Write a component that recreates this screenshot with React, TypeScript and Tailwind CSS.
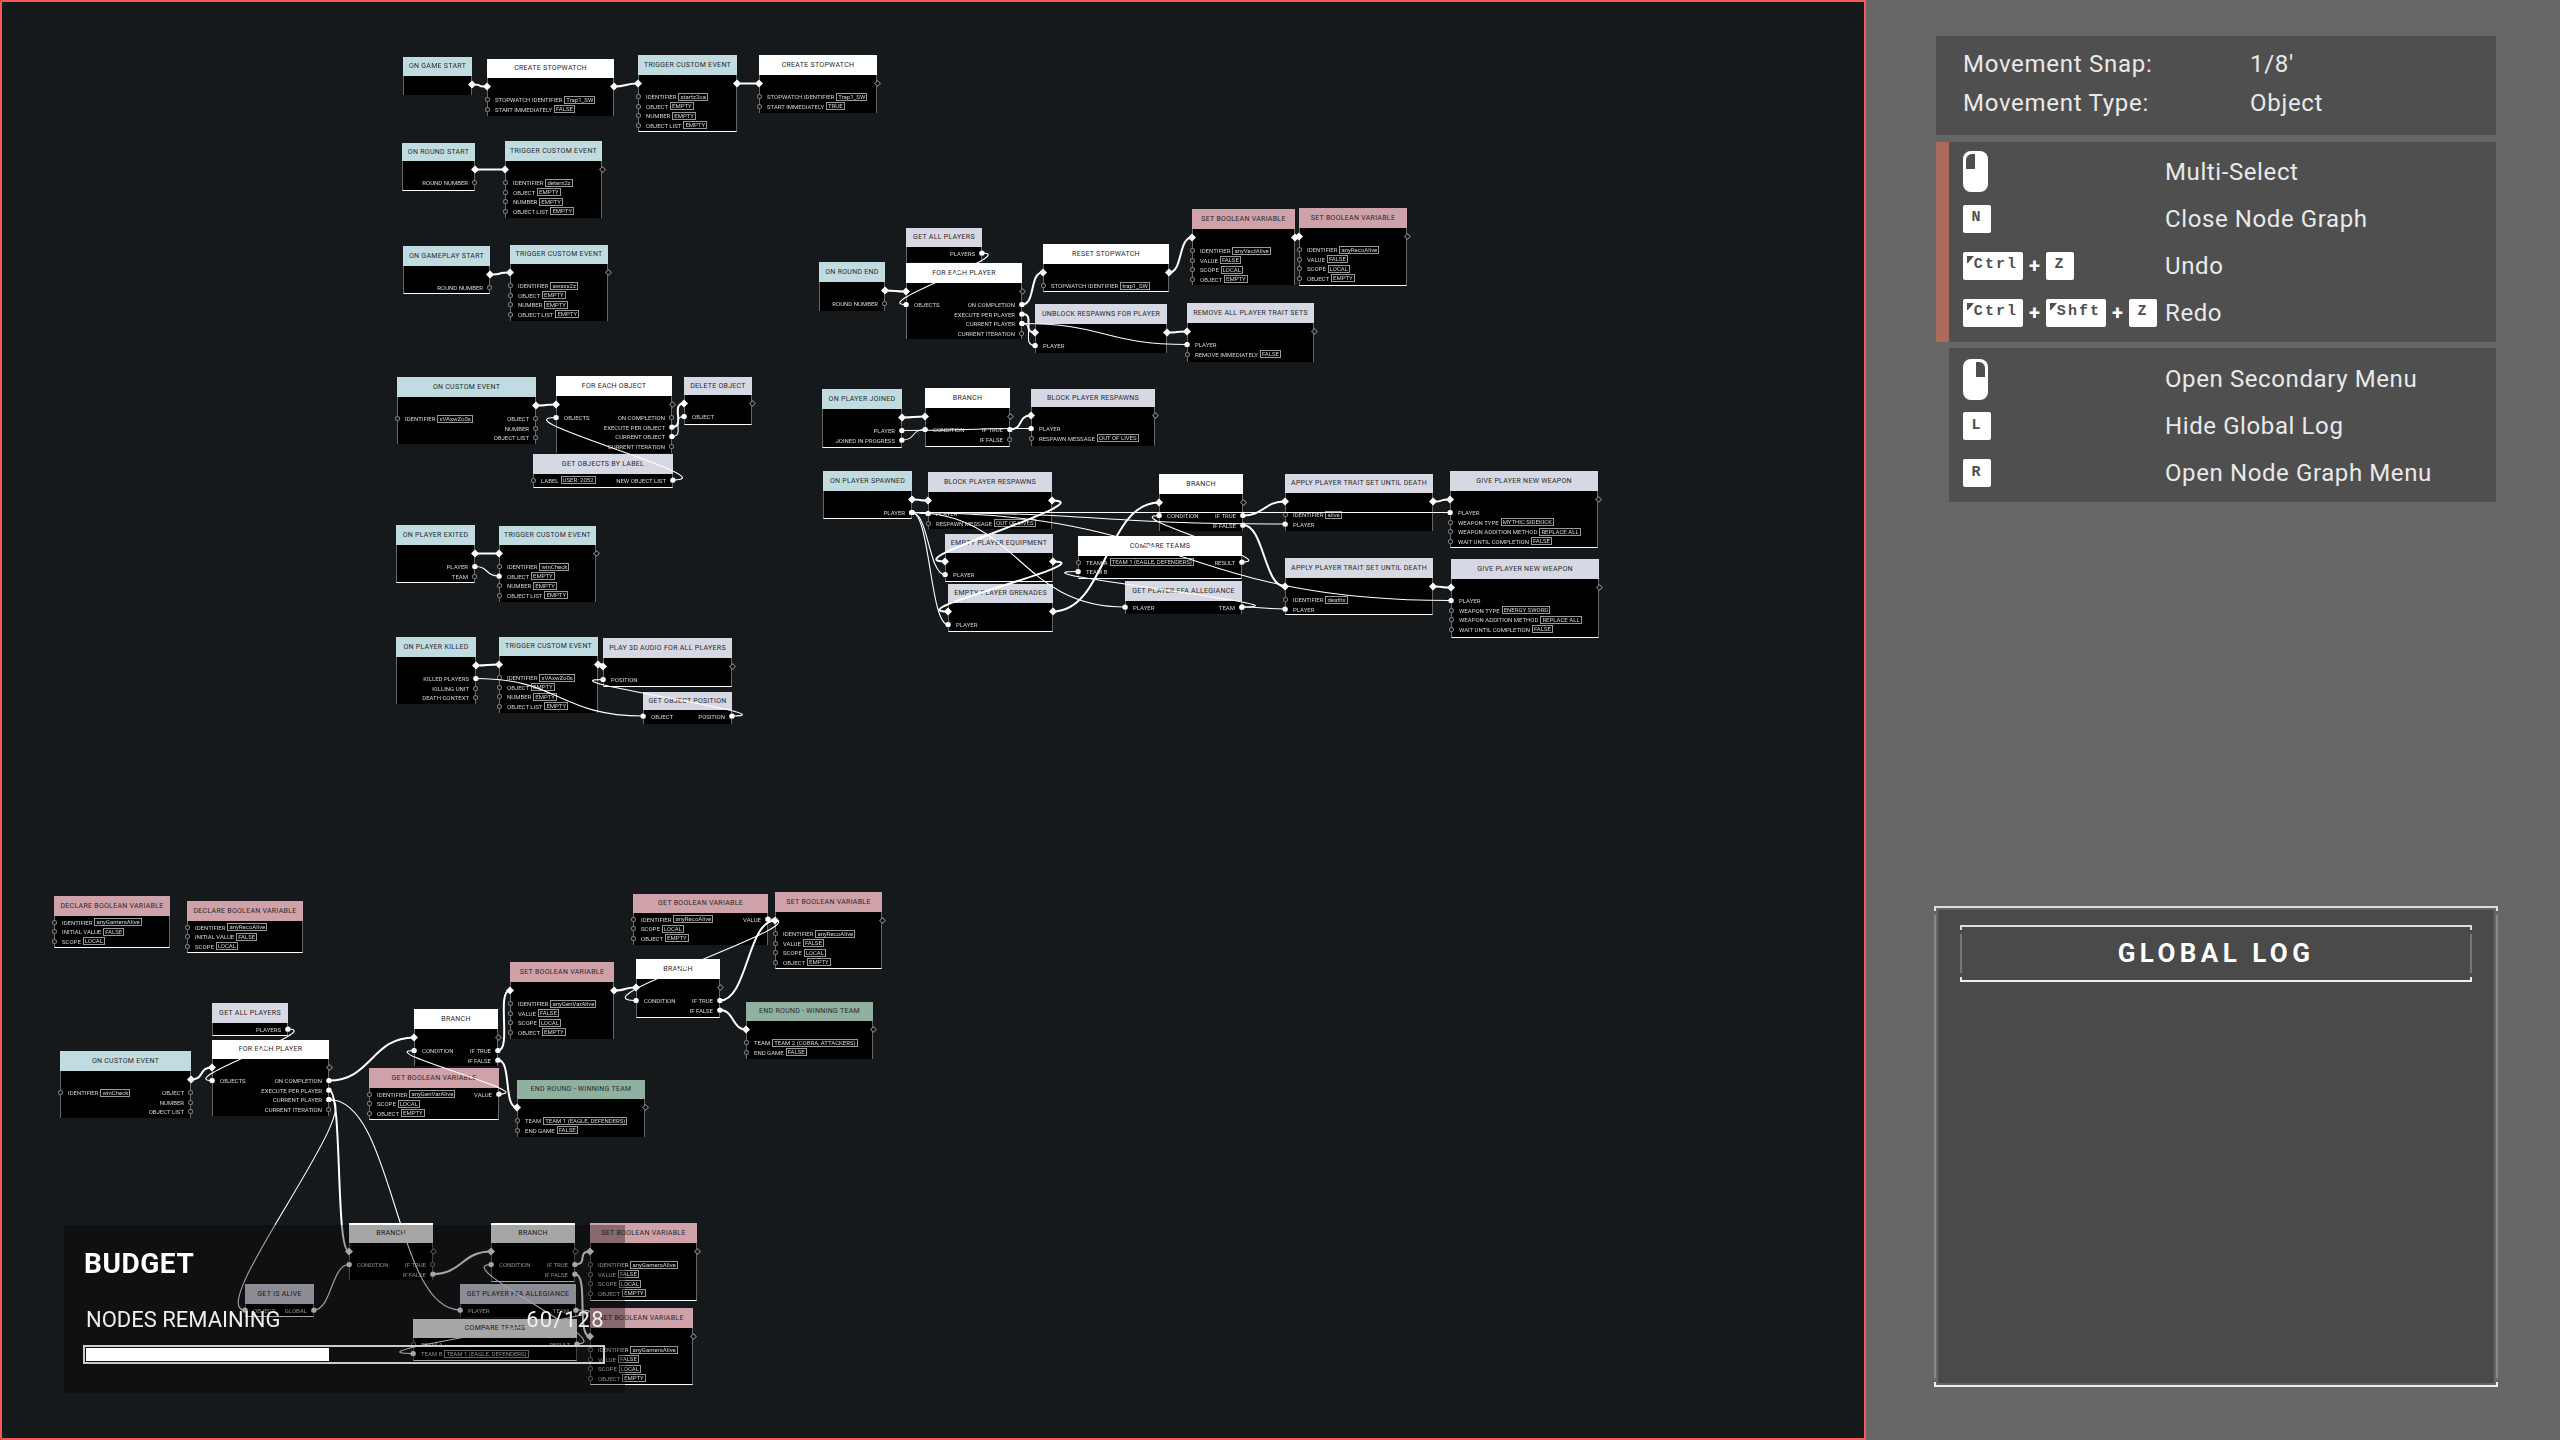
import React from "react";

const TEAL = "bg-[#c0dce1]";
const WHITE = "bg-white";
const LILAC = "bg-[#d6d8e4]";
const ROSE = "bg-[#cfa1a9]";
const GREEN = "bg-[#90b0a0]";

type Row = string | [string, string];
type GraphNode = {
  title: string;
  x: number;
  y: number;
  w: number;
  h: number;
  head: number;
  color: string;
  exec?: boolean;
  left?: Row[];
  right?: string[];
  line?: boolean;
};

const triggerRows = (id: string): Row[] => [
  ["IDENTIFIER", id],
  ["OBJECT", "EMPTY"],
  ["NUMBER", "EMPTY"],
  ["OBJECT LIST", "EMPTY"],
];
const stopwatchRows = (start: string): Row[] => [
  ["STOPWATCH IDENTIFIER", "Trap1_SW"],
  ["START IMMEDIATELY", start],
];
const boolRows = (id: string): Row[] => [
  ["IDENTIFIER", id],
  ["VALUE", "FALSE"],
  ["SCOPE", "LOCAL"],
  ["OBJECT", "EMPTY"],
];
const weaponRows = (kind: string): Row[] => [
  "PLAYER",
  ["WEAPON TYPE", kind],
  ["WEAPON ADDITION METHOD", "REPLACE ALL"],
  ["WAIT UNTIL COMPLETION", "FALSE"],
];
const forEachRight = (word: string) => ["ON COMPLETION", `EXECUTE PER ${word}`, `CURRENT ${word}`, "CURRENT ITERATION"];
const customRight = ["OBJECT", "NUMBER", "OBJECT LIST"];

const nodes: Record<string, GraphNode> = {
  a1: { title: "ON GAME START", x: 403, y: 57, w: 69, h: 38, head: 19, color: TEAL, exec: true },
  a2: { title: "CREATE STOPWATCH", x: 487, y: 59, w: 127, h: 57, head: 19, color: WHITE, exec: true, left: stopwatchRows("FALSE") },
  a3: { title: "TRIGGER CUSTOM EVENT", x: 638, y: 55, w: 99, h: 77, head: 20, color: TEAL, exec: true, left: triggerRows("startz2oa"), line: true },
  a4: { title: "CREATE STOPWATCH", x: 759, y: 55, w: 118, h: 58, head: 20, color: WHITE, exec: true, left: stopwatchRows("TRUE") },
  b1: { title: "ON ROUND START", x: 402, y: 143, w: 73, h: 48, head: 18, color: TEAL, exec: true, right: ["ROUND NUMBER"], line: true },
  b2: { title: "TRIGGER CUSTOM EVENT", x: 505, y: 141, w: 97, h: 77, head: 20, color: TEAL, exec: true, left: triggerRows("deterx2z") },
  c1: { title: "ON GAMEPLAY START", x: 403, y: 246, w: 87, h: 48, head: 20, color: TEAL, exec: true, right: ["ROUND NUMBER"], line: true },
  c2: { title: "TRIGGER CUSTOM EVENT", x: 510, y: 245, w: 98, h: 76, head: 19, color: TEAL, exec: true, left: triggerRows("awaxs2z") },

  d1: { title: "ON ROUND END", x: 819, y: 262, w: 66, h: 49, head: 20, color: TEAL, exec: true, right: ["ROUND NUMBER"] },
  d2: { title: "GET ALL PLAYERS", x: 906, y: 228, w: 76, h: 34, head: 19, color: LILAC, right: ["PLAYERS"] },
  d3: { title: "FOR EACH PLAYER", x: 906, y: 263, w: 116, h: 76, head: 20, color: WHITE, exec: true, left: ["OBJECTS"], right: forEachRight("PLAYER") },
  d4: { title: "RESET STOPWATCH", x: 1043, y: 244, w: 126, h: 48, head: 20, color: WHITE, exec: true, left: [["STOPWATCH IDENTIFIER", "trap1_SW"]], line: true },
  d5: { title: "SET BOOLEAN VARIABLE", x: 1192, y: 209, w: 103, h: 76, head: 20, color: ROSE, exec: true, left: boolRows("anyVectAlive") },
  d6: { title: "SET BOOLEAN VARIABLE", x: 1299, y: 208, w: 108, h: 78, head: 20, color: ROSE, exec: true, left: boolRows("anyRecoAlive"), line: true },
  d7: { title: "UNBLOCK RESPAWNS FOR PLAYER", x: 1035, y: 304, w: 132, h: 49, head: 20, color: LILAC, exec: true, left: ["PLAYER"] },
  d8: { title: "REMOVE ALL PLAYER TRAIT SETS", x: 1187, y: 303, w: 127, h: 59, head: 20, color: LILAC, exec: true, left: ["PLAYER", ["REMOVE IMMEDIATELY", "FALSE"]] },
  e1: { title: "ON PLAYER JOINED", x: 822, y: 389, w: 80, h: 59, head: 20, color: TEAL, exec: true, right: ["PLAYER", "JOINED IN PROGRESS"], line: true },
  e2: { title: "BRANCH", x: 925, y: 388, w: 85, h: 59, head: 20, color: WHITE, exec: true, left: ["CONDITION"], right: ["IF TRUE", "IF FALSE"], line: true },
  e3: { title: "BLOCK PLAYER RESPAWNS", x: 1031, y: 389, w: 124, h: 57, head: 18, color: LILAC, exec: true, left: ["PLAYER", ["RESPAWN MESSAGE", "OUT OF LIVES"]] },

  f1: { title: "ON PLAYER SPAWNED", x: 823, y: 471, w: 89, h: 48, head: 20, color: TEAL, exec: true, right: ["PLAYER"], line: true },
  f2: { title: "BLOCK PLAYER RESPAWNS", x: 928, y: 472, w: 124, h: 57, head: 20, color: LILAC, exec: true, left: ["PLAYER", ["RESPAWN MESSAGE", "OUT OF LIVES"]] },
  f3: { title: "EMPTY PLAYER EQUIPMENT", x: 945, y: 534, w: 108, h: 48, head: 19, color: LILAC, exec: true, left: ["PLAYER"], line: true },
  f4: { title: "EMPTY PLAYER GRENADES", x: 948, y: 584, w: 105, h: 48, head: 19, color: LILAC, exec: true, left: ["PLAYER"], line: true },
  f5: { title: "BRANCH", x: 1159, y: 474, w: 84, h: 57, head: 20, color: WHITE, exec: true, left: ["CONDITION"], right: ["IF TRUE", "IF FALSE"] },
  f6: { title: "COMPARE TEAMS", x: 1078, y: 536, w: 164, h: 43, head: 20, color: WHITE, left: [["TEAM A", "TEAM 1 (EAGLE, DEFENDERS)"], "TEAM B"], right: ["RESULT"], line: true },
  f7: { title: "GET PLAYER FFA ALLEGIANCE", x: 1125, y: 581, w: 117, h: 33, head: 20, color: LILAC, left: ["PLAYER"], right: ["TEAM"] },
  f8: { title: "APPLY PLAYER TRAIT SET UNTIL DEATH", x: 1285, y: 474, w: 148, h: 57, head: 19, color: LILAC, exec: true, left: [["IDENTIFIER", "alive"], "PLAYER"] },
  f9: { title: "APPLY PLAYER TRAIT SET UNTIL DEATH", x: 1285, y: 558, w: 148, h: 57, head: 20, color: LILAC, exec: true, left: [["IDENTIFIER", "deaths"], "PLAYER"], line: true },
  f10: { title: "GIVE PLAYER NEW WEAPON", x: 1450, y: 471, w: 148, h: 77, head: 20, color: LILAC, exec: true, left: weaponRows("MYTHIC SIDEKICK"), line: true },
  f11: { title: "GIVE PLAYER NEW WEAPON", x: 1451, y: 559, w: 148, h: 79, head: 20, color: LILAC, exec: true, left: weaponRows("ENERGY SWORD"), line: true },

  g1: { title: "ON CUSTOM EVENT", x: 397, y: 377, w: 139, h: 67, head: 20, color: TEAL, exec: true, left: [["IDENTIFIER", "xVAxwZo0s"]], right: customRight },
  g2: { title: "FOR EACH OBJECT", x: 556, y: 376, w: 116, h: 77, head: 20, color: WHITE, exec: true, left: ["OBJECTS"], right: forEachRight("OBJECT") },
  g3: { title: "DELETE OBJECT", x: 684, y: 377, w: 68, h: 48, head: 18, color: LILAC, exec: true, left: ["OBJECT"], line: true },
  g4: { title: "GET OBJECTS BY LABEL", x: 533, y: 454, w: 140, h: 34, head: 20, color: LILAC, left: [["LABEL", "USER: 2052"]], right: ["NEW OBJECT LIST"], line: true },
  h1: { title: "ON PLAYER EXITED", x: 396, y: 525, w: 79, h: 58, head: 20, color: TEAL, exec: true, right: ["PLAYER", "TEAM"], line: true },
  h2: { title: "TRIGGER CUSTOM EVENT", x: 499, y: 526, w: 97, h: 76, head: 19, color: TEAL, exec: true, left: triggerRows("winCheck") },
  i1: { title: "ON PLAYER KILLED", x: 396, y: 637, w: 80, h: 67, head: 20, color: TEAL, exec: true, right: ["KILLED PLAYERS", "KILLING UNIT", "DEATH CONTEXT"] },
  i2: { title: "TRIGGER CUSTOM EVENT", x: 499, y: 637, w: 99, h: 76, head: 19, color: TEAL, exec: true, left: triggerRows("xVAxwZo0s") },
  i3: { title: "PLAY 3D AUDIO FOR ALL PLAYERS", x: 603, y: 638, w: 129, h: 49, head: 20, color: LILAC, exec: true, left: ["POSITION"], line: true },
  i4: { title: "GET OBJECT POSITION", x: 643, y: 692, w: 89, h: 32, head: 18, color: LILAC, left: ["OBJECT"], right: ["POSITION"] },

  j1: { title: "DECLARE BOOLEAN VARIABLE", x: 54, y: 896, w: 116, h: 52, head: 20, color: ROSE, left: [["IDENTIFIER", "anyGamersAlive"], ["INITIAL VALUE", "FALSE"], ["SCOPE", "LOCAL"]], line: true },
  j2: { title: "DECLARE BOOLEAN VARIABLE", x: 187, y: 901, w: 116, h: 52, head: 20, color: ROSE, left: [["IDENTIFIER", "anyRecoAlive"], ["INITIAL VALUE", "FALSE"], ["SCOPE", "LOCAL"]], line: true },
  k1: { title: "GET ALL PLAYERS", x: 212, y: 1003, w: 76, h: 33, head: 20, color: LILAC, right: ["PLAYERS"], line: true },
  k2: { title: "FOR EACH PLAYER", x: 212, y: 1040, w: 117, h: 76, head: 19, color: WHITE, exec: true, left: ["OBJECTS"], right: forEachRight("PLAYER") },
  k3: { title: "ON CUSTOM EVENT", x: 60, y: 1051, w: 131, h: 67, head: 20, color: TEAL, exec: true, left: [["IDENTIFIER", "winCheck"]], right: customRight },
  k4: { title: "BRANCH", x: 414, y: 1009, w: 84, h: 57, head: 20, color: WHITE, exec: true, left: ["CONDITION"], right: ["IF TRUE", "IF FALSE"] },
  k5: { title: "GET BOOLEAN VARIABLE", x: 369, y: 1068, w: 130, h: 52, head: 20, color: ROSE, left: [["IDENTIFIER", "anyGenVarAlive"], ["SCOPE", "LOCAL"], ["OBJECT", "EMPTY"]], right: ["VALUE"], line: true },
  k6: { title: "SET BOOLEAN VARIABLE", x: 510, y: 962, w: 104, h: 77, head: 20, color: ROSE, exec: true, left: boolRows("anyGenVarAlive") },
  k7: { title: "GET BOOLEAN VARIABLE", x: 633, y: 894, w: 135, h: 51, head: 19, color: ROSE, left: [["IDENTIFIER", "anyRecoAlive"], ["SCOPE", "LOCAL"], ["OBJECT", "EMPTY"]], right: ["VALUE"] },
  k8: { title: "SET BOOLEAN VARIABLE", x: 775, y: 892, w: 107, h: 77, head: 20, color: ROSE, exec: true, left: boolRows("anyRecoAlive"), line: true },
  k9: { title: "BRANCH", x: 636, y: 959, w: 84, h: 59, head: 20, color: WHITE, exec: true, left: ["CONDITION"], right: ["IF TRUE", "IF FALSE"], line: true },
  k10: { title: "END ROUND - WINNING TEAM", x: 746, y: 1002, w: 127, h: 57, head: 19, color: GREEN, exec: true, left: [["TEAM", "TEAM 2 (COBRA, ATTACKERS)"], ["END GAME", "FALSE"]] },
  k11: { title: "END ROUND - WINNING TEAM", x: 517, y: 1080, w: 128, h: 57, head: 19, color: GREEN, exec: true, left: [["TEAM", "TEAM 1 (EAGLE, DEFENDERS)"], ["END GAME", "FALSE"]] },

  m1: { title: "GET IS ALIVE", x: 245, y: 1284, w: 69, h: 33, head: 20, color: LILAC, left: ["OBJECT"], right: ["GLOBAL"], line: true },
  m2: { title: "BRANCH", x: 349, y: 1223, w: 84, h: 57, head: 20, color: WHITE, exec: true, left: ["CONDITION"], right: ["IF TRUE", "IF FALSE"] },
  m3: { title: "BRANCH", x: 491, y: 1223, w: 84, h: 59, head: 20, color: WHITE, exec: true, left: ["CONDITION"], right: ["IF TRUE", "IF FALSE"], line: true },
  m4: { title: "SET BOOLEAN VARIABLE", x: 590, y: 1223, w: 107, h: 78, head: 20, color: ROSE, exec: true, left: boolRows("anyGamersAlive"), line: true },
  m5: { title: "GET PLAYER FFA ALLEGIANCE", x: 460, y: 1284, w: 116, h: 33, head: 20, color: LILAC, left: ["PLAYER"], right: ["TEAM"] },
  m6: { title: "COMPARE TEAMS", x: 413, y: 1319, w: 164, h: 42, head: 19, color: WHITE, left: ["TEAM A", ["TEAM B", "TEAM 1 (EAGLE, DEFENDERS)"]], right: ["RESULT"], line: true },
  m7: { title: "SET BOOLEAN VARIABLE", x: 590, y: 1308, w: 103, h: 77, head: 20, color: ROSE, exec: true, left: boolRows("anyGamersAlive"), line: true },
};

// [from, out port, to, in port]: port "e" is the exec diamond, a number is a row
type Wire = [string, "e" | number, string, "e" | number];
const wires: Wire[] = [
  ["a1", "e", "a2", "e"], ["a2", "e", "a3", "e"], ["a3", "e", "a4", "e"],
  ["b1", "e", "b2", "e"], ["c1", "e", "c2", "e"],
  ["d1", "e", "d3", "e"], ["d2", 0, "d3", 0], ["d3", 0, "d4", "e"], ["d4", "e", "d5", "e"], ["d5", "e", "d6", "e"],
  ["d3", 1, "d7", "e"], ["d3", 2, "d7", 0], ["d7", "e", "d8", "e"], ["d3", 2, "d8", 0],
  ["e1", "e", "e2", "e"], ["e1", 1, "e2", 0], ["e1", 0, "e3", 0], ["e2", 0, "e3", "e"],
  ["f1", "e", "f2", "e"], ["f2", "e", "f3", "e"], ["f3", "e", "f4", "e"], ["f4", "e", "f5", "e"],
  ["f1", 0, "f2", 0], ["f1", 0, "f3", 0], ["f1", 0, "f4", 0], ["f1", 0, "f7", 0], ["f1", 0, "f8", 1], ["f1", 0, "f10", 0], ["f1", 0, "f11", 0],
  ["f7", 0, "f6", 1], ["f7", 0, "f9", 1], ["f6", 0, "f5", 0], ["f5", 0, "f8", "e"], ["f5", 1, "f9", "e"], ["f8", "e", "f10", "e"], ["f9", "e", "f11", "e"],
  ["g1", "e", "g2", "e"], ["g2", 1, "g3", "e"], ["g2", 2, "g3", 0], ["g4", 0, "g2", 0],
  ["h1", "e", "h2", "e"], ["h1", 0, "h2", 1],
  ["i1", "e", "i2", "e"], ["i2", "e", "i3", "e"], ["i1", 0, "i4", 0], ["i4", 0, "i3", 0],
  ["k3", "e", "k2", "e"], ["k1", 0, "k2", 0], ["k2", 0, "k4", "e"], ["k5", 0, "k4", 0], ["k4", 0, "k6", "e"], ["k4", 1, "k11", "e"],
  ["k6", "e", "k9", "e"], ["k7", 0, "k9", 0], ["k9", 0, "k8", "e"], ["k9", 1, "k10", "e"],
  ["k2", 1, "m2", "e"], ["k2", 2, "m1", 0], ["k2", 2, "m5", 0], ["m1", 0, "m2", 0], ["m2", 1, "m3", "e"],
  ["m5", 0, "m6", 1], ["m6", 0, "m3", 0], ["m3", 0, "m4", "e"], ["m3", 1, "m7", "e"],
];

const portY = (n: GraphNode, port: "e" | number) =>
  port === "e" ? n.y + n.head + 8.5 : n.y + n.head + (n.exec ? 21.5 : 6) + port * 9.5;

function WireLayer() {
  return (
    <svg className="absolute inset-0" width={1866} height={1440} fill="none">
      {wires.map(([from, out, to, into], i) => {
        const a = nodes[from];
        const b = nodes[to];
        const x1 = a.x + a.w;
        const y1 = portY(a, out);
        const x2 = b.x;
        const y2 = portY(b, into);
        const k = Math.max(Math.abs(x2 - x1) / 2, 14);
        const thick = out === "e" || into === "e";
        return (
          <g key={i}>
            <path d={`M${x1} ${y1}C${x1 + k} ${y1} ${x2 - k} ${y2} ${x2} ${y2}`} stroke="#fff" strokeWidth={thick ? 2 : 1.1} />
            {[[x1, y1, out], [x2, y2, into]].map(([x, y, p], j) =>
              p === "e" ? (
                <path key={j} d={`M${+x - 4} ${y}l4 -4l4 4l-4 4z`} fill="#fff" />
              ) : (
                <circle key={j} cx={x} cy={y} r={2.6} fill="#fff" />
              ),
            )}
          </g>
        );
      })}
    </svg>
  );
}

function PortRow({ row, right }: { row: Row; right?: boolean }) {
  const [label, value] = typeof row === "string" ? [row, ""] : row;
  return (
    <div className={`relative flex h-[9.5px] items-center gap-[2px] ${right ? "justify-end pr-[6px]" : "pl-[7px]"}`}>
      <span className={`absolute top-[2.25px] size-[5px] rounded-full border border-white/50 bg-black ${right ? "-right-[3px]" : "-left-[3px]"}`} />
      <span>{label}</span>
      {value && <span className="border border-white/60 px-[1px] leading-[6px]">{value}</span>}
    </div>
  );
}

function NodeCard({ node }: { node: GraphNode }) {
  return (
    <div
      className="absolute flex flex-col overflow-visible bg-black blur-[0.4px]"
      style={{ left: node.x, top: node.y, width: node.w, height: node.h }}
    >
      <div
        className={`flex shrink-0 items-center justify-center overflow-hidden whitespace-nowrap text-[7px] tracking-[0.04em] text-[#2a2a2a] ${node.color}`}
        style={{ height: node.head }}
      >
        {node.title}
      </div>
      <div className={`relative flex-1 border-x border-white/40 text-[6px] whitespace-nowrap text-white/80 ${node.line ? "border-b border-b-white" : ""}`}>
        {node.exec && (
          <span className="absolute -right-[4px] top-[6px] size-[5px] rotate-45 border border-white/50 bg-black" />
        )}
        <div className={`absolute inset-x-0 flex justify-between ${node.exec ? "top-[16.75px]" : "top-[1.25px]"}`}>
          <div className="flex flex-1 flex-col">
            {(node.left ?? []).map((row, i) => (
              <PortRow key={i} row={row} />
            ))}
          </div>
          <div className="flex flex-1 flex-col">
            {(node.right ?? []).map((row, i) => (
              <PortRow key={i} row={row} right />
            ))}
          </div>
        </div>
      </div>
    </div>
  );
}

function BudgetPanel() {
  return (
    <div className="absolute left-[64px] top-[1225px] flex h-[168px] w-[561px] flex-col bg-black/35 pl-[20px] pt-[27px] text-white">
      <div className="text-[28px] leading-[24px] font-bold tracking-[0.02em]">BUDGET</div>
      <div className="mt-[34px] flex w-[521px] justify-between pl-[2px] text-[22px] leading-[20px] text-[#eee]">
        <span>NODES REMAINING</span>
        <span className="tracking-[0.06em]">60/128</span>
      </div>
      <div className="mt-[15px] ml-[-1px] h-[19px] w-[522px] border-2 border-[#ccc] p-[1px]">
        <div className="h-full w-[243px] bg-white" />
      </div>
    </div>
  );
}

function MouseIcon({ right }: { right?: boolean }) {
  return (
    <svg width={25} height={41} viewBox="0 0 25 41" className="shrink-0">
      <rect width={25} height={41} rx={8} fill="#fff" />
      <path d={right ? "M13 3h3a6 6 0 0 1 6 6v9h-9z" : "M12 3H9a6 6 0 0 0-6 6v9h9z"} fill="#4f4f4f" />
    </svg>
  );
}

function Key({ label, wide }: { label: string; wide?: boolean }) {
  return (
    <div className={`relative flex h-[28px] shrink-0 items-center justify-center rounded-[2px] bg-white text-[15px] font-bold tracking-[0.14em] text-[#4f4f4f] font-['Liberation_Mono',monospace] ${wide ? "w-[60px] pl-[6px]" : "w-[28px]"}`}>
      {wide && (
        <svg width={8} height={8} className="absolute left-[4px] top-[4px]">
          <path d="M0 0h7L1 7H0z" fill="#4f4f4f" />
        </svg>
      )}
      {label}
    </div>
  );
}

function Plus() {
  return <span className="w-[23px] shrink-0 text-center text-[20px] leading-none font-bold text-white">+</span>;
}

function Shortcut({ children, label }: { children: React.ReactNode; label: string }) {
  return (
    <div className="flex h-[47px] items-center">
      <div className="flex w-[202px] shrink-0 items-center">{children}</div>
      <span className="text-[24px] tracking-[0.025em] text-[#e9e9e9]">{label}</span>
    </div>
  );
}

function CornerFrame({ color = "#ddd", children, className }: { color?: string; children: React.ReactNode; className: string }) {
  return (
    <div className={`relative ${className}`}>
      <div className="absolute inset-x-0 top-0 h-[2px] bg-[#ddd]" />
      <div className="absolute inset-x-0 bottom-0 h-[2px] bg-[#eee]" />
      <div className="absolute left-0 top-0 h-[5px] w-[2px] bg-[#ddd]" />
      <div className="absolute right-0 top-0 h-[5px] w-[2px] bg-[#ddd]" />
      <div className="absolute bottom-0 left-0 h-[5px] w-[2px] bg-[#eee]" />
      <div className="absolute bottom-0 right-0 h-[5px] w-[2px] bg-[#eee]" />
      <div className="absolute bottom-[9px] left-0 top-[9px] w-[2px]" style={{ backgroundColor: color }} />
      <div className="absolute bottom-[9px] right-0 top-[9px] w-[2px]" style={{ backgroundColor: color }} />
      {children}
    </div>
  );
}

export default function App() {
  return (
    <div className="flex h-[1440px] w-[2560px] overflow-hidden font-['Roboto',sans-serif]">
      {/* Node graph */}
      <main className="relative h-full w-[1866px] shrink-0 bg-[#16191c]">
        {Object.entries(nodes).map(([id, node]) => (
          <NodeCard key={id} node={node} />
        ))}
        <WireLayer />
        <BudgetPanel />
        <div className="pointer-events-none absolute inset-0 border-2 border-[#f4585c]" />
      </main>

      {/* Side panel */}
      <aside className="flex min-w-0 flex-1 flex-col bg-[#666] pl-[70px] pr-[64px] pt-[36px]">
        <section className="flex h-[99px] flex-col justify-center bg-[#4f4f4f] pb-[3px] pl-[27px] text-[24px] leading-[39px] tracking-[0.03em] text-[#e9e9e9]">
          <div className="flex"><span className="w-[287px]">Movement Snap:</span><span>1/8'</span></div>
          <div className="flex"><span className="w-[287px]">Movement Type:</span><span>Object</span></div>
        </section>

        <section className="mt-[7px] flex h-[200px] flex-col justify-center border-l-[13px] border-[#ab6b5b] bg-[#4f4f4f] pl-[14px]">
          <Shortcut label="Multi-Select"><MouseIcon /></Shortcut>
          <Shortcut label="Close Node Graph"><Key label="N" /></Shortcut>
          <Shortcut label="Undo"><Key label="Ctrl" wide /><Plus /><Key label="Z" /></Shortcut>
          <Shortcut label="Redo"><Key label="Ctrl" wide /><Plus /><Key label="Shft" wide /><Plus /><Key label="Z" /></Shortcut>
        </section>

        <section className="ml-[13px] mt-[6px] flex h-[154px] flex-col justify-center bg-[#4f4f4f] pl-[14px] pt-[2px]">
          <Shortcut label="Open Secondary Menu"><MouseIcon right /></Shortcut>
          <Shortcut label="Hide Global Log"><Key label="L" /></Shortcut>
          <Shortcut label="Open Node Graph Menu"><Key label="R" /></Shortcut>
        </section>

        <CornerFrame color="#888" className="-ml-[2px] mt-auto mb-[53px] h-[481px] w-[564px] p-[4px]">
          <div className="h-full bg-[#4a4a4a] px-[22px] pt-[15px]">
            <CornerFrame color="#777" className="flex h-[57px] items-center justify-center">
              <h2 className="text-[26px] font-bold tracking-[0.17em] text-white">GLOBAL LOG</h2>
            </CornerFrame>
          </div>
        </CornerFrame>
      </aside>
    </div>
  );
}
